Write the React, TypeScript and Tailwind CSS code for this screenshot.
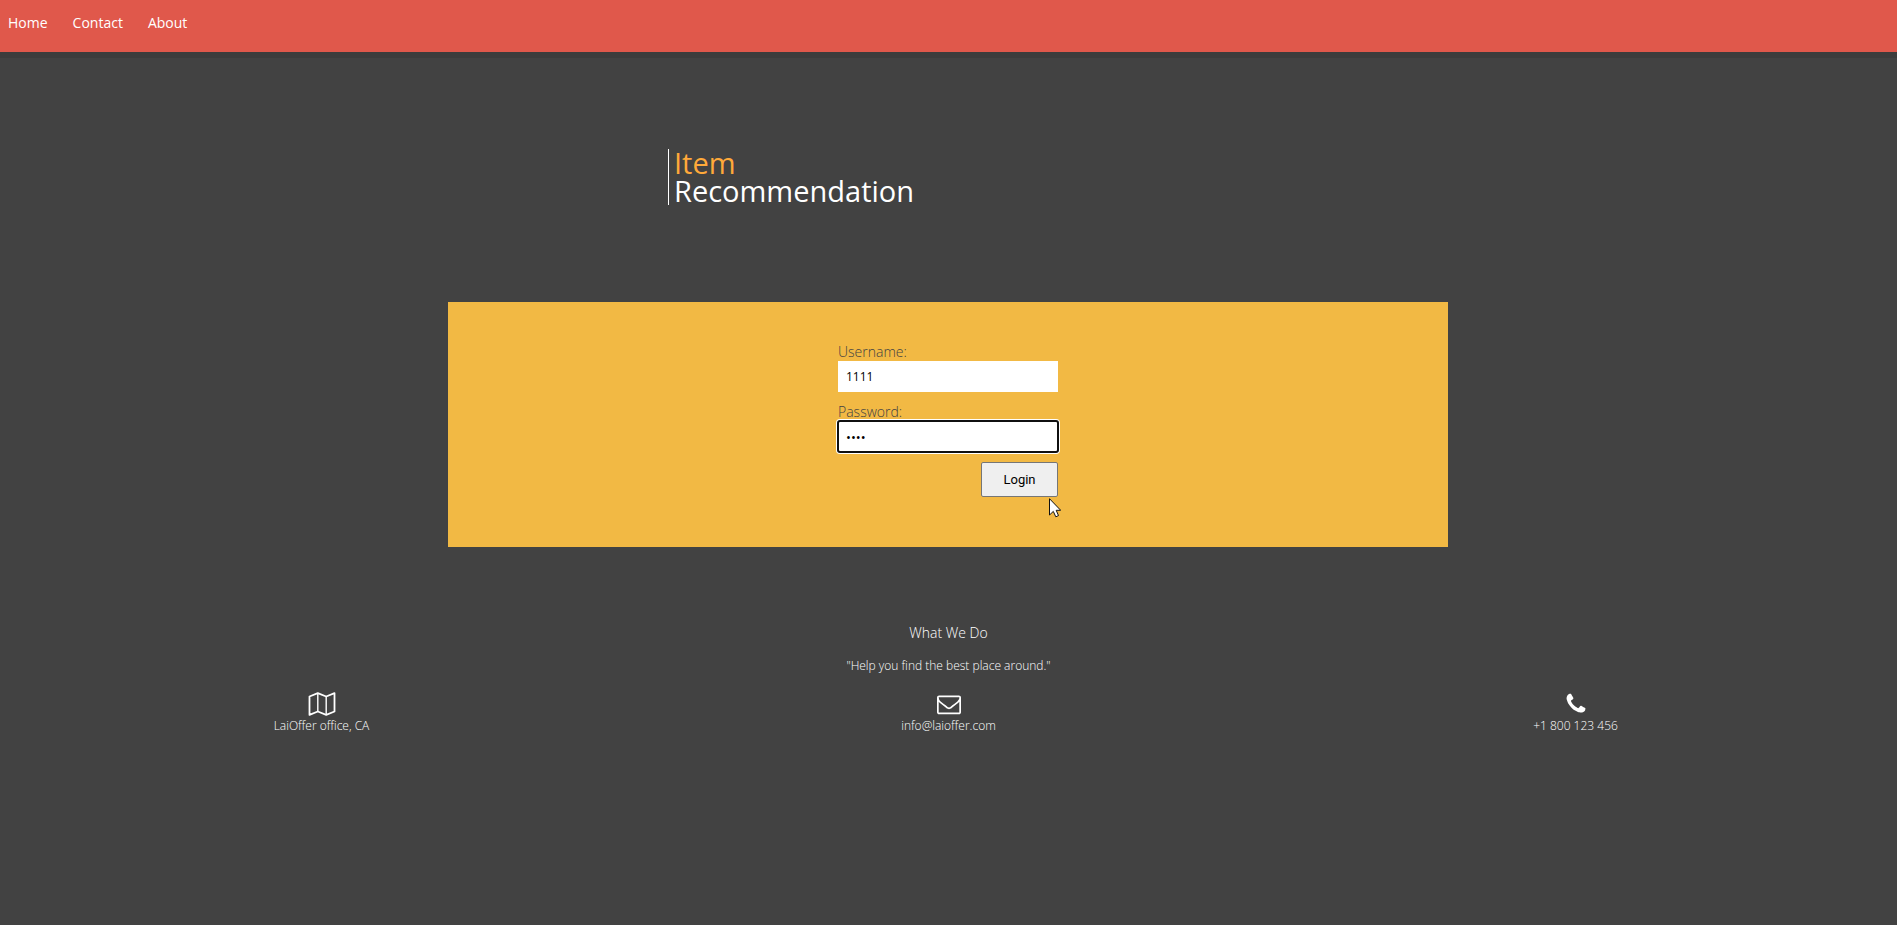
import React from "react";

function MapIcon() {
  return (
    <svg className="h-6 w-7" viewBox="0 0 28 24" fill="none" stroke="currentColor" strokeWidth="1.8" strokeLinejoin="round" aria-hidden="true">
      <path d="M1.5 4.5 9.8 1.2 18.2 4.5 26.5 1.2V19.5L18.2 22.8 9.8 19.5 1.5 22.8Z" />
      <path d="M9.8 1.2V19.5M18.2 4.5V22.8" strokeWidth="1.4" />
    </svg>
  );
}

function EnvelopeIcon() {
  return (
    <svg className="size-6" viewBox="0 0 1792 1792" fill="currentColor" aria-hidden="true">
      <path d="M1664 1504v-768q-32 36-69 66-268 206-426 338-51 43-83 67t-86.500 48.500-102.500 24.500h-2q-48 0-102.500-24.500t-86.500-48.500-83-67q-158-132-426-338-37-30-69-66v768q0 13 9.500 22.500t22.500 9.500h1472q13 0 22.500-9.500t9.500-22.500zm0-1051v-24.500l-.5-13-3-12.500-5.500-9-9-7.500-14-2.500h-1472q-13 0-22.500 9.500t-9.500 22.500q0 168 147 284 193 152 401 317 6 5 35 29.500t46 37.500 44.500 31.500 50.500 27.500 43 9h2q20 0 43-9t50.500-27.500 44.500-31.500 46-37.500 35-29.500q208-165 401-317 54-43 100.500-115.500t46.500-131.500zm128-37v1088q0 66-47 113t-113 47h-1472q-66 0-113-47t-47-113v-1088q0-66 47-113t113-47h1472q66 0 113 47t47 113z" />
    </svg>
  );
}

function PhoneIcon() {
  return (
    <svg className="size-6" viewBox="0 0 1792 1792" fill="currentColor" aria-hidden="true">
      <path d="M1600 1240q0 27-10 70.500t-21 68.500q-21 50-122 106-94 51-186 51-27 0-53-3.500t-57.500-12.500-47-14.500-55.500-20.500-49-18q-98-35-175-83-127-79-264-216t-216-264q-48-77-83-175-3-9-18-49t-20.500-55.500-14.500-47-12.500-57.500-3.500-53q0-92 51-186 56-101 106-122 25-11 68.500-21t70.500-10q14 0 21 3 18 6 53 76 11 19 30 54t35 63.500 31 53.500q3 4 17.500 25t21.500 35.500 7 28.500q0 20-28.500 50t-62 55-62 53-28.500 46q0 9 5 22.500t8.500 20.500 14 24 11.500 19q76 137 174 235t235 174q2 1 19 11.500t24 14 20.500 8.500 22.500 5q18 0 46-28.500t53-62 55-62 50-28.500q14 0 28.500 7t35.500 21.500 25 17.500q25 15 53.500 31t63.500 35 54 30q70 35 76 53 3 7 3 21z" />
    </svg>
  );
}

const contacts = [
  { icon: <MapIcon />, text: "LaiOffer office, CA" },
  { icon: <EnvelopeIcon />, text: "info@laioffer.com" },
  { icon: <PhoneIcon />, text: "+1 800 123 456" },
];

export default function App() {
  return (
    <div className="min-h-screen bg-[#424242] font-['Open_Sans',sans-serif] text-white">
      <nav className="h-[52px] bg-[#e0584b] px-2 pt-3 shadow-[0_6px_0_#3c3c3c]">
        <ul className="flex gap-[25px] text-sm leading-[22px]">
          <li><a href="#home">Home</a></li>
          <li><a href="#contact">Contact</a></li>
          <li><a href="#about">About</a></li>
        </ul>
      </nav>

      <main className="mx-auto max-w-[1001px] pt-[97px] pr-px">
        <h1 className="mx-auto w-[560px] border-l border-white pl-[5px] text-[29px] leading-7">
          <span className="block text-[#ffa93a]">Item</span>
          <span className="block">Recommendation</span>
        </h1>

        <section className="mt-[97px] bg-[#f2b944] pt-10 pb-[50px]">
          <form className="relative mx-auto flex w-[220px] flex-col" onSubmit={(e) => e.preventDefault()}>
            <label htmlFor="username" className="pt-px text-sm leading-[18px] font-light text-[#424242]">Username:</label>
            <input
              id="username"
              type="text"
              defaultValue="1111"
              className="h-[31px] bg-white px-2 text-xs text-black outline-none"
            />
            <label htmlFor="password" className="mt-[10px] pt-px text-sm leading-[18px] font-light text-[#424242]">Password:</label>
            <input
              id="password"
              type="password"
              defaultValue="1111"
              autoFocus
              className="h-[31px] rounded-xs bg-white px-2 text-[13px] text-black ring-2 ring-white outline-2 -outline-offset-1 outline-[#101010]"
            />
            <button type="submit" className="mt-[10px] h-[35px] w-[77px] self-end rounded-xs border border-[#767676] bg-[#efefef] font-[Roboto,sans-serif] text-[13px] text-black">
              Login
            </button>
            <svg className="absolute top-[156px] left-[211px] h-5 w-3" viewBox="0 0 12 20" aria-hidden="true">
              <path d="M.5.7V17L4.300 13.400 6.800 18.800 9.500 17.600 7.200 12.300H11.700Z" fill="white" stroke="#111" strokeWidth="1" />
            </svg>
          </form>
        </section>
      </main>

      <footer className="px-2 pt-[76px] text-center text-xs font-light">
        <h2 className="text-sm leading-5 font-light">What We Do</h2>
        <p className="mt-[15px] leading-4">"Help you find the best place around."</p>
        <ul className="mt-[18px] grid grid-cols-3">
          {contacts.map((c) => (
            <li key={c.text} className="flex flex-col items-center leading-5">
              {c.icon}
              {c.text}
            </li>
          ))}
        </ul>
      </footer>
    </div>
  );
}
